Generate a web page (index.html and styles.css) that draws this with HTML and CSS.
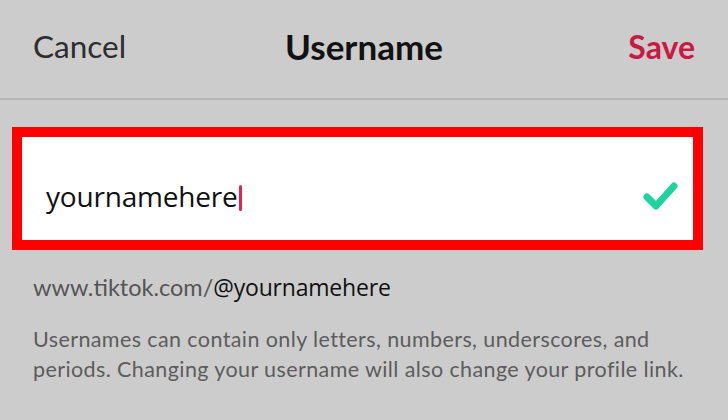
FILE: index.html
```html
<!DOCTYPE html>
<html>
<head>
<meta charset="utf-8">
<link rel="stylesheet" href="styles.css">
</head>
<body>
<div class="screen">
  <header class="topbar">
    <span class="cancel">Cancel</span>
    <span class="title">Username</span>
    <span class="save">Save</span>
  </header>
  <div class="divider"></div>
  <div class="field-wrap">
    <div class="field">
      <span class="value">yournamehere</span><span class="caret"></span>
      <svg class="check" width="36" height="32" viewBox="0 0 36 32">
        <path d="M4 17 L13 26 L31 6" fill="none" stroke="#1ed49e" stroke-width="7" stroke-linecap="round" stroke-linejoin="round"/>
      </svg>
    </div>
  </div>
  <div class="link"><span class="domain">www.tiktok.com/</span><span class="handle">@yournamehere</span></div>
  <p class="help">Usernames can contain only letters, numbers, underscores, and periods. Changing your username will also change your profile link.</p>
</div>
</body>
</html>
```
FILE: styles.css
```css
html, body {
  margin: 0;
  padding: 0;
  background: #cccccc;
}
.screen {
  width: 728px;
  height: 420px;
  overflow: hidden;
  font-family: "Lato", sans-serif;
}
.topbar {
  height: 98px;
  display: flex;
  align-items: center;
  justify-content: space-between;
  padding: 0 33px;
  box-sizing: border-box;
}
.cancel {
  font-size: 31.5px;
  color: #2e2e2e;
  font-weight: 400;
  width: 110px;
  margin-top: -6px;
}
.title {
  font-size: 35px;
  font-weight: 700;
  color: #121212;
  margin-top: -6px;
}
.save {
  font-size: 32px;
  font-weight: 700;
  color: #c91a44;
  width: 110px;
  text-align: right;
  margin-top: -6px;
}
.divider {
  height: 2px;
  background: #b6b6b6;
}
.field-wrap {
  padding: 27px 25px 0 12px;
}
.field {
  border: 10px solid #ff0000;
  background: #ffffff;
  height: 103px;
  box-sizing: content-box;
  display: flex;
  align-items: center;
  padding: 0 14px 0 24px;
}
.field > * {
  position: relative;
  top: 7px;
}
.value {
  font-family: "Open Sans", sans-serif;
  font-size: 28px;
  color: #111111;
  letter-spacing: -0.2px;
}
.caret {
  width: 3px;
  height: 26px;
  background: #e0234f;
  margin-left: 1px;
  margin-top: 4px;
  border-radius: 2px;
}
.check {
  margin-left: auto;
}
.link {
  padding: 21px 33px 0;
  font-size: 23.5px;
}
.domain {
  color: #555555;
  font-weight: 400;
}
.handle {
  font-family: "Open Sans", sans-serif;
  color: #111111;
  font-size: 23px;
  letter-spacing: -0.2px;
}
.help {
  margin: 21px 0 0 33px;
  width: 660px;
  font-size: 21.5px;
  letter-spacing: 0.4px;
  line-height: 30px;
  color: #5c5c5c;
  font-weight: 400;
}
```
